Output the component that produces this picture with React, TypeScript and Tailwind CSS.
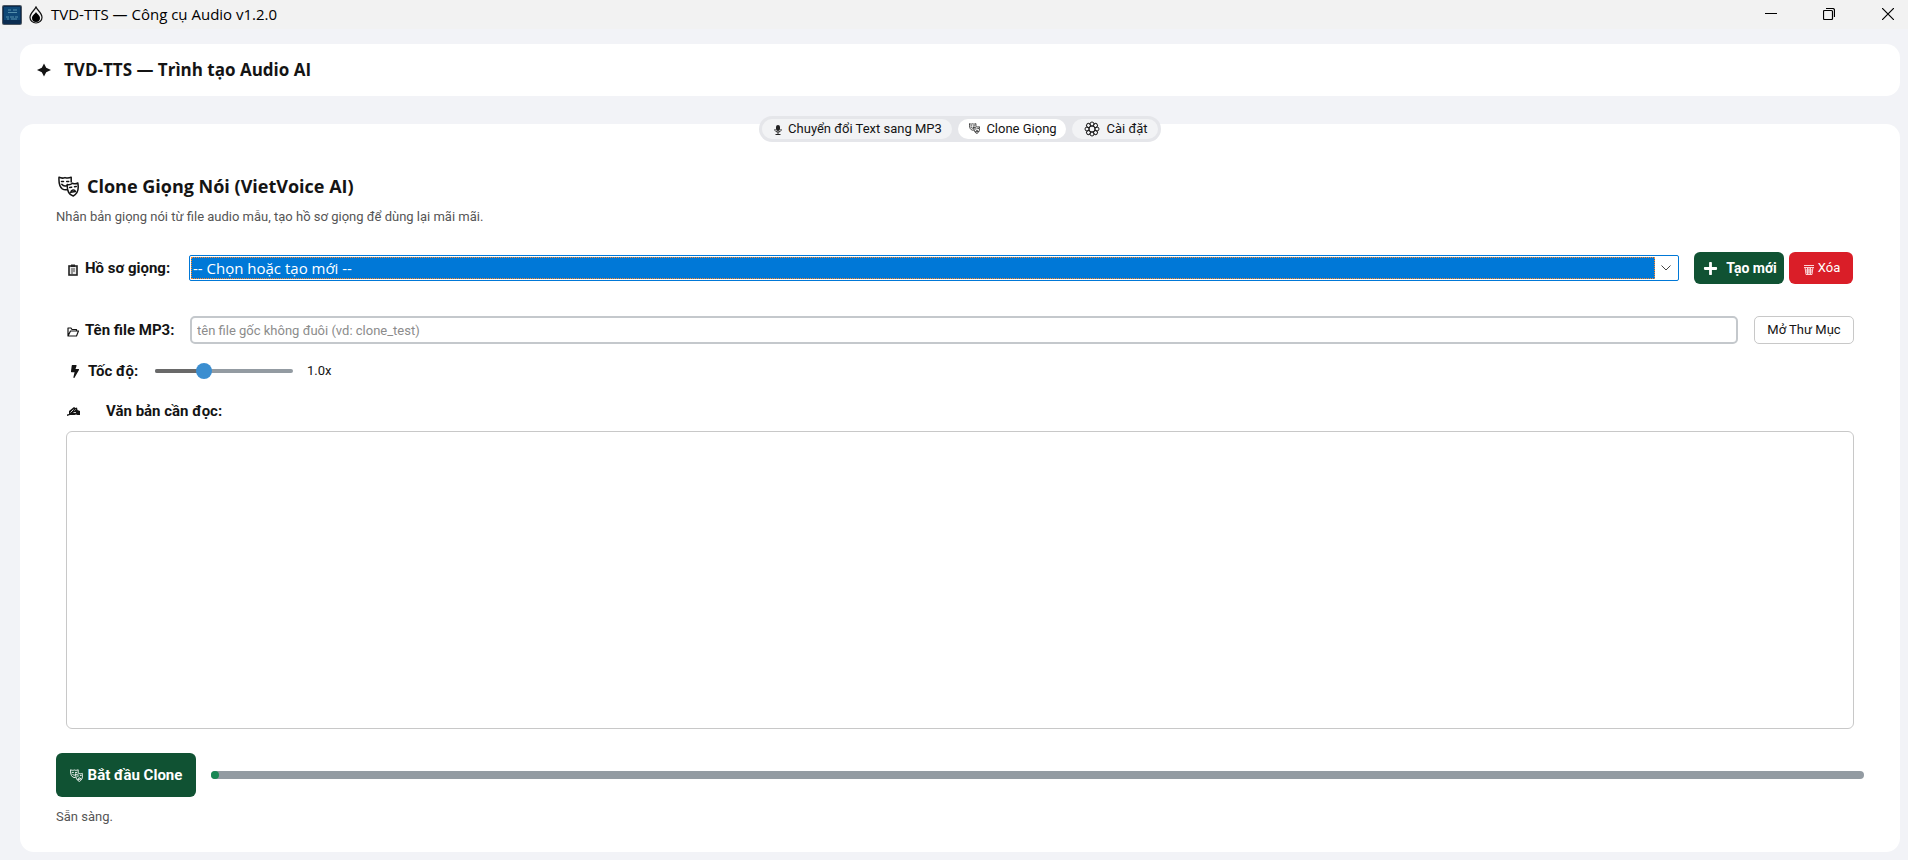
import React, { useState } from 'react'
import { FaBolt, FaPlus } from 'react-icons/fa'

type IconProps = { className?: string }

const MasksIcon = ({ className }: IconProps) => (
    <svg viewBox="0 0 21 21" className={className} fill="none" stroke="currentColor" strokeWidth="1.5" strokeLinejoin="round" strokeLinecap="round" aria-hidden="true">
        <path d="M13.2 6V1.200C11 2.300 9 2.400 7 1.600 5 2.400 3 2.300 1 1.200c-.3 5 .2 9.300 3.300 11.600 1.300.9 2.600 1.200 4.200.9" />
        <path d="M3.500 5.500h2M8.700 5.500h2M3.800 8.300c1.200 1.600 3 2.100 4.800 1.400" />
        <path d="M9.200 8.400c1.800.8 3.600.3 5.300-1.200 1.900.8 3.600.8 5.300-.2 1 5 .3 10.500-4.600 13-4.300-1.300-6.200-6-6-11.600z" />
        <path d="M11.700 11.500l2-.3M16.500 10.700l1.800-.3M12.700 16.300c.5-2.600 3.900-3 4.800-.8z" />
    </svg>
)

const AppLogo = () => (
    <svg viewBox="0 0 20 20" className="size-5" aria-hidden="true">
        <rect width="20" height="20" rx="2" fill="#4b5560" />
        <rect x="1" y="1" width="18" height="18" rx="1" fill="#0b2c50" />
        <rect x="2" y="2" width="16" height="13" fill="#0f4876" />
        <path d="M6 5h3M11 5h4M6 7.500h9M4 12h3M8 12h4M13 12h3M5 14h2M9 14h6" stroke="#5590ac" strokeWidth="1.200" />
    </svg>
)

const DropIcon = () => (
    <svg viewBox="0 0 14 18" className="h-[18px] w-[14px]" aria-hidden="true">
        <path d="M7 1C5.500 4.500 1 7 1 11.500a6 5.500 0 0 0 12 0C13 7 8.500 4.500 7 1z" fill="none" stroke="#111" strokeWidth="1.200" />
        <path d="M7 6c-1 2-4 3.500-4 6a4 4 0 0 0 8 0c0-2.500-3-4-4-6z" fill="#000" />
    </svg>
)

const SparkIcon = () => (
    <svg viewBox="0 0 14 14" className="size-[14px]" fill="#141414" aria-hidden="true">
        <path d="M7 .5l2.200 4.300L14 7 9.200 9.200 7 13.500 4.800 9.200 0 7l4.800-2.200z" />
    </svg>
)

const MicIcon = () => (
    <svg viewBox="0 -2 8 12" className="h-3 w-2" aria-hidden="true">
        <rect x="2" width="4" height="6" rx="2" fill="#222" />
        <path d="M1 4v1.500Q1.500 7 4 7t3-1.500V4M4 7v2M1.500 9.500h5" fill="none" stroke="#222" />
    </svg>
)

const GearIcon = () => (
    <svg viewBox="0 0 16 16" className="size-4" fill="none" stroke="#1f1f1f" aria-hidden="true">
        {[0, 45, 90, 135, 180, 225, 270, 315].map((deg) => (
            <circle key={deg} cx="8" cy="3" r="2" transform={`rotate(${deg} 8 8)`} />
        ))}
        <circle cx="8" cy="8" r="3" />
    </svg>
)

const ClipboardIcon = () => (
    <svg viewBox="0 -3 10 15" className="h-[15px] w-[10px]" aria-hidden="true">
        <rect x="1" y="2" width="8" height="9" fill="#e8e8e8" stroke="#222" strokeWidth="1.600" />
        <path d="M3 .5h4V3H3z" fill="#222" />
        <path d="M3 5h4M3 7h4M3 9h2" stroke="#444" />
    </svg>
)

const FolderIcon = () => (
    <svg viewBox="0 -4 12 14" className="h-[14px] w-3" fill="none" stroke="#141414" strokeWidth="1.200" strokeLinejoin="round" aria-hidden="true">
        <path d="M1 9V1h3l1 1.500h4.500V4M1 9l2.500-5h8L9.500 9z" />
    </svg>
)

const WritingIcon = () => (
    <svg viewBox="0 0 13 9" className="h-[9px] w-[13px]" aria-hidden="true">
        <path d="M0 9v-1.500L2 7V4l5-4 1.500 1L10 .5 10.500 3 13 4v4h-2.500L9 7.500 7.500 8H3z" fill="#141414" />
        <path d="M3.500 5.500l3-3M6.500 5.500h2.500M7.500 3.500l1-1" stroke="#fff" strokeWidth=".8" />
    </svg>
)

const TrashIcon = () => (
    <svg viewBox="0 -2 10 13" className="h-[13px] w-[10px]" fill="none" stroke="#fbd5d7" aria-hidden="true">
        <path d="M0 1.500h10M0 3.500h10M1 3l1 7.500h6L9 3M3.500 4v6M5 4v6M6.500 4v6M2 6h6M2 8h6" />
    </svg>
)

const tabs = [
    { id: 'tts', label: 'Chuyển đổi Text sang MP3', icon: <MicIcon />, className: 'w-[190px] gap-[6px] pl-[2px]' },
    { id: 'clone', label: 'Clone Giọng', icon: <MasksIcon className="size-[11px]" />, className: 'w-[108px] gap-[6px] pl-[2px]' },
    { id: 'settings', label: 'Cài đặt', icon: <GearIcon />, className: 'w-[86px] gap-[6px] pl-[2px]' },
]

const TitleBar = () => (
    <header className="flex h-[29px] items-center bg-[#f2f2f2] pl-[2px] font-['Open_Sans',sans-serif] text-black">
        <AppLogo />
        <span className="ml-[7px]">
            <DropIcon />
        </span>
        <span className="ml-2 text-[15px]">TVD-TTS — Công cụ Audio v1.2.0</span>
        <div className="ml-auto flex h-7 self-start">
            <button type="button" aria-label="Minimize" className="grid w-[58px] place-items-center">
                <svg viewBox="0 0 12 12" className="size-3" stroke="#000"><path d="M0 5.500h12" /></svg>
            </button>
            <button type="button" aria-label="Restore" className="mr-[10px] grid w-[58px] place-items-center">
                <svg viewBox="0 0 12 12" className="size-3" fill="none" stroke="#000" strokeWidth="1.200">
                    <rect x=".5" y="2.500" width="9" height="9" rx="1" />
                    <path d="M3 .5h6.500q2 0 2 2V9" />
                </svg>
            </button>
            <button type="button" aria-label="Close" className="grid w-10 place-items-center">
                <svg viewBox="0 0 12 12" className="size-3" stroke="#000" strokeWidth="1.200"><path d="M0 0l12 12M12 0L0 12" /></svg>
            </button>
        </div>
    </header>
)

export default function App() {
    const [activeTab, setActiveTab] = useState('clone')
    const [speed, setSpeed] = useState(1)
    const percent = ((speed - 0.5) / 1.5) * 100

    return (
        <div className="flex min-h-screen flex-col bg-[#f2f3f7] font-[Roboto,sans-serif] text-[13px] text-[#141414]">
            <TitleBar />

            <main className="flex flex-1 flex-col pt-[15px] pr-2 pb-2 pl-5">
                <div className="flex h-[52px] items-center gap-[13px] rounded-[14px] bg-white px-[17px]">
                    <SparkIcon />
                    <h1 className="font-['Open_Sans',sans-serif] text-[17px] font-bold">TVD-TTS — Trình tạo Audio AI</h1>
                </div>

                <section className="relative mt-7 flex flex-1 flex-col rounded-[14px] bg-white px-9 pt-12 pb-[25px]">
                    <nav className="absolute -top-2 left-1/2 flex h-[26px] -translate-x-1/2 gap-[6px] rounded-full bg-[#e5e6ea] p-[3px]">
                        {tabs.map(({ id, label, icon, className }) => (
                            <button
                                key={id}
                                type="button"
                                onClick={() => setActiveTab(id)}
                                className={`flex items-center justify-center rounded-full pb-px whitespace-nowrap ${className} ${activeTab === id ? 'bg-white' : 'bg-[#f2f3f5]'}`}
                            >
                                {icon}
                                {label}
                            </button>
                        ))}
                    </nav>

                    <h2 className="flex h-7 items-center gap-2 pl-[2px] font-['Open_Sans',sans-serif] text-lg font-bold">
                        <MasksIcon className="size-[21px]" />
                        Clone Giọng Nói (VietVoice AI)
                    </h2>
                    <p className="mt-[7px] leading-5 text-[#555]">Nhân bản giọng nói từ file audio mẫu, tạo hồ sơ giọng để dùng lại mãi mãi.</p>

                    <div className="mt-[25px] flex h-8 items-center pr-[11px] pl-3">
                        <label htmlFor="profile" className="flex w-[121px] shrink-0 items-center gap-[7px] text-[15px] leading-5 font-bold">
                            <ClipboardIcon />
                            Hồ sơ giọng:
                        </label>
                        <div className="relative flex h-[26px] flex-1 rounded-[2px] border border-[#0078d7] bg-white p-px">
                            <select
                                id="profile"
                                className="w-full appearance-none border border-dotted border-[#ff8728] bg-[#0078d7] pl-px font-['Open_Sans',sans-serif] text-[15px] leading-5 text-white outline-none"
                            >
                                <option>-- Chọn hoặc tạo mới --</option>
                            </select>
                            <span className="pointer-events-none grid w-[22px] shrink-0 place-items-center">
                                <svg viewBox="0 0 10 6" className="h-[6px] w-[10px]" fill="none" stroke="#444"><path d="M.5.5L5 5 9.500.5" /></svg>
                            </span>
                        </div>
                        <button type="button" className="ml-[15px] flex h-8 w-[90px] items-center justify-center gap-2 rounded-md bg-[#105233] pl-[2px] text-sm font-bold text-white">
                            <FaPlus className="size-[15px]" />
                            Tạo mới
                        </button>
                        <button type="button" className="ml-[5px] flex h-8 w-16 items-center justify-center gap-1 rounded-md bg-[#da1e28] pl-[2px] text-white">
                            <TrashIcon />
                            Xóa
                        </button>
                    </div>

                    <div className="mt-8 flex h-7 items-center pr-[10px] pl-[11px]">
                        <label htmlFor="filename" className="flex w-[123px] shrink-0 items-center gap-[6px] text-[15px] leading-5 font-bold">
                            <FolderIcon />
                            Tên file MP3:
                        </label>
                        <input
                            id="filename"
                            type="text"
                            placeholder="tên file gốc không đuôi (vd: clone_test)"
                            className="h-7 min-w-0 flex-1 rounded-[5px] border-2 border-[#c4c8cc] bg-white px-[5px] outline-none placeholder:text-[#8c8c8c]"
                        />
                        <button type="button" className="ml-4 h-7 w-[100px] rounded-[5px] border border-[#c8c8c8] bg-white">Mở Thư Mục</button>
                    </div>

                    <div className="mt-[15px] flex h-6 items-center pl-[14px]">
                        <label htmlFor="speed" className="flex w-[85px] items-center gap-2 text-[15px] leading-5 font-bold">
                            <FaBolt className="h-[13px] w-[10px]" />
                            Tốc độ:
                        </label>
                        <div className="relative flex h-4 w-[138px] items-center">
                            <div className="h-1 w-full overflow-hidden rounded-full bg-[#939ba2]">
                                <div className="h-full bg-[#696969]" style={{ width: `${percent}%` }} />
                            </div>
                            <input
                                id="speed"
                                type="range"
                                min="0.5"
                                max="2"
                                step="0.1"
                                value={speed}
                                onChange={(e) => setSpeed(Number(e.target.value))}
                                className="absolute inset-0 w-full appearance-none bg-transparent [&::-webkit-slider-thumb]:size-4 [&::-webkit-slider-thumb]:appearance-none [&::-webkit-slider-thumb]:rounded-full [&::-webkit-slider-thumb]:bg-[#3b8ed0]"
                            />
                        </div>
                        <output htmlFor="speed" className="ml-[14px]">{speed.toFixed(1)}x</output>
                    </div>

                    <label htmlFor="content" className="mt-4 flex h-6 items-center gap-[26px] pl-[11px] text-[15px] leading-5 font-bold">
                        <WritingIcon />
                        Văn bản cần đọc:
                    </label>
                    <div className="mt-2 flex flex-1 px-[10px]">
                        <textarea id="content" className="flex-1 resize-none rounded-md border border-[#c8c8c8] bg-white p-2 outline-none" />
                    </div>

                    <div className="mt-6 flex items-center gap-[15px]">
                        <button type="button" className="flex h-11 w-[140px] shrink-0 items-center justify-center gap-[5px] rounded-md bg-[#105233] text-[15px] leading-5 font-bold text-white">
                            <MasksIcon className="size-[13px]" />
                            Bắt đầu Clone
                        </button>
                        <div role="progressbar" aria-valuenow={0} aria-label="Tiến độ" className="h-2 flex-1 rounded-full bg-[#939ba2]">
                            <div className="size-2 rounded-full bg-[#198754]" />
                        </div>
                    </div>
                    <p className="mt-[10px] leading-5 text-[#555]">Sẵn sàng.</p>
                </section>
            </main>
        </div>
    )
}
